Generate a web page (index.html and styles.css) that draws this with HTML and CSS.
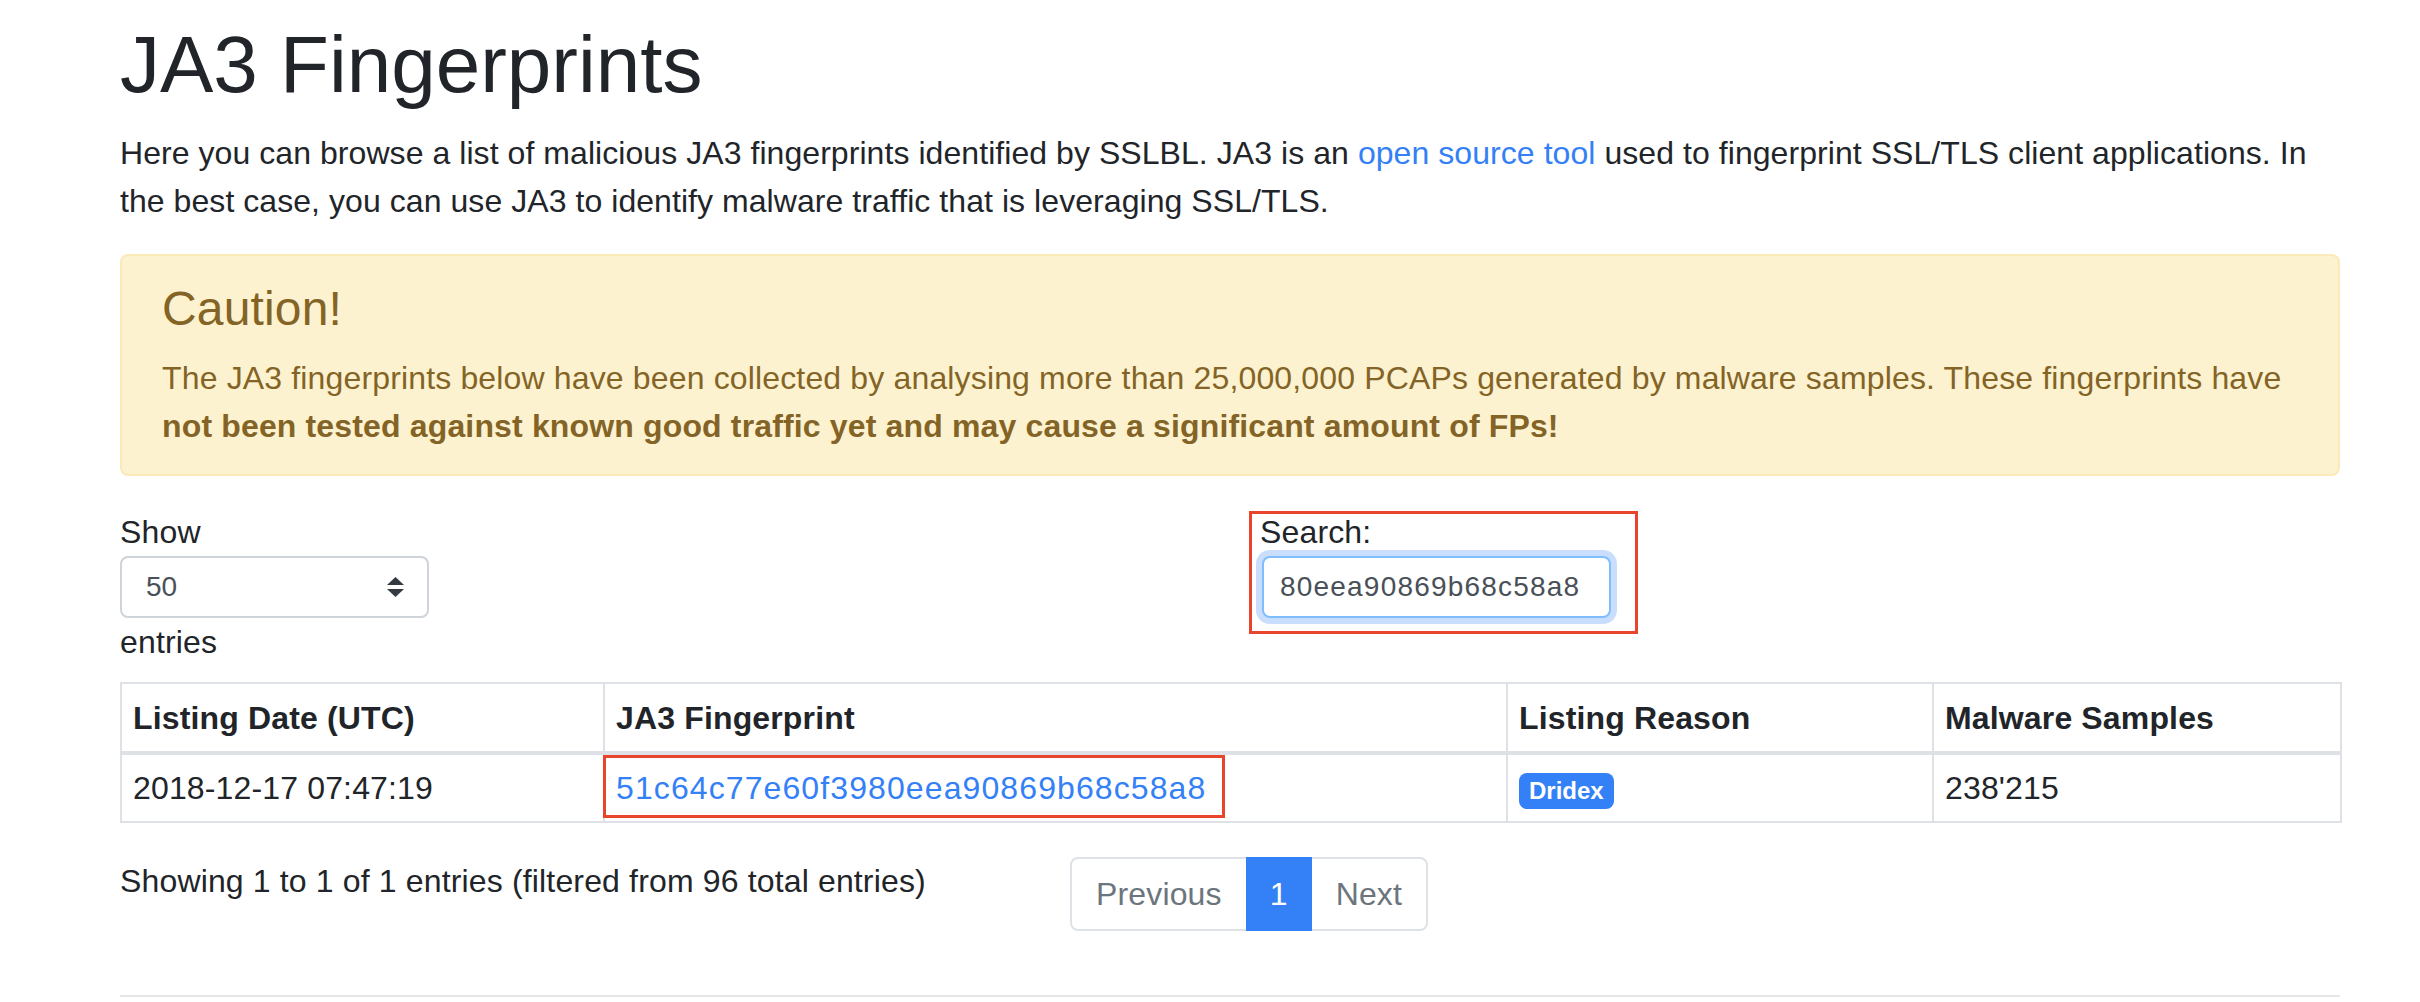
FILE: index.html
```html
<!DOCTYPE html>
<html lang="en">
<head>
<meta charset="utf-8">
<title>JA3 Fingerprints</title>
<link rel="stylesheet" href="styles.css">
</head>
<body>
<main class="container">
  <h1 class="page-title">JA3 Fingerprints</h1>
  <p class="intro">Here you can browse a list of malicious JA3 fingerprints identified by SSLBL. JA3 is an <a class="link" href="#">open source tool</a> used to fingerprint SSL/TLS client applications. In the best case, you can use JA3 to identify malware traffic that is leveraging SSL/TLS.</p>

  <div class="alert">
    <h4 class="alert-heading">Caution!</h4>
    <p class="alert-text">The JA3 fingerprints below have been collected by analysing more than 25,000,000 PCAPs generated by malware samples. These fingerprints have <strong>not been tested against known good traffic yet and may cause a significant amount of FPs!</strong></p>
  </div>

  <div class="dt-top">
    <div class="dt-length">
      <label class="length-label" for="length">Show</label>
      <div class="select-wrap">
        <select id="length" class="length-select"><option>50</option></select>
        <svg class="select-arrows" viewBox="0 0 17 20" aria-hidden="true"><path d="M8.5 0 L17 8 H0 Z M0 12 H17 L8.5 20 Z" fill="#343a40"/></svg>
      </div>
      <span class="length-label">entries</span>
    </div>
    <div class="dt-filter">
      <label class="filter-label" for="search">Search:</label>
      <input id="search" class="search-input" type="text" value="80eea90869b68c58a8" spellcheck="false">
      <span class="annot annot-search"></span>
    </div>
  </div>

  <table class="dt-table">
    <colgroup>
      <col class="col-date">
      <col class="col-fp">
      <col class="col-reason">
      <col class="col-samples">
    </colgroup>
    <thead>
      <tr>
        <th>Listing Date (UTC)</th>
        <th>JA3 Fingerprint</th>
        <th>Listing Reason</th>
        <th>Malware Samples</th>
      </tr>
    </thead>
    <tbody>
      <tr>
        <td>2018-12-17 07:47:19</td>
        <td class="fp-cell"><a class="link fp-link" href="#">51c64c77e60f3980eea90869b68c58a8</a><span class="annot annot-fp"></span></td>
        <td><span class="badge">Dridex</span></td>
        <td>238'215</td>
      </tr>
    </tbody>
  </table>

  <div class="dt-bottom">
    <div class="dt-info">Showing 1 to 1 of 1 entries (filtered from 96 total entries)</div>
    <ul class="pagination">
      <li class="page-item first"><span class="page-link">Previous</span></li>
      <li class="page-item active"><span class="page-link">1</span></li>
      <li class="page-item last"><span class="page-link">Next</span></li>
    </ul>
  </div>

  <hr class="divider">
</main>
</body>
</html>
```

FILE: styles.css
```css
* {
  box-sizing: border-box;
}

body {
  margin: 0;
  font-family: "Liberation Sans", Arial, sans-serif;
  font-size: 32px;
  line-height: 48px;
  letter-spacing: 0.15px;
  color: #212529;
  background: #ffffff;
}

.container {
  width: 2220px;
  margin-left: 120px;
  padding-top: 17px;
}

.page-title {
  font-size: 80px;
  line-height: 96px;
  font-weight: 400;
  letter-spacing: 0;
  margin: 0 0 16px;
}

.intro {
  letter-spacing: 0.06px;
  margin: 0 0 29px;
}

.link {
  color: #3480f6;
  text-decoration: none;
}

.alert {
  background: #fcf2cf;
  border: 2px solid #fbeab9;
  border-radius: 8px;
  padding: 24px 34px 24px 40px;
  color: #846426;
  margin-bottom: 32px;
}

.alert-heading {
  font-size: 48px;
  line-height: 57.6px;
  font-weight: 400;
  margin: 0 0 16px;
}

.alert-text {
  margin: 0;
}

.dt-top {
  display: grid;
  grid-template-columns: 1080px 1080px;
  column-gap: 60px;
}

.length-label {
  display: block;
}

.select-wrap {
  position: relative;
  width: 309px;
  height: 62px;
}

.length-select {
  appearance: none;
  -webkit-appearance: none;
  display: block;
  width: 100%;
  height: 100%;
  border: 2px solid #ced4da;
  border-radius: 8px;
  background: #ffffff;
  font-family: "Liberation Sans", Arial, sans-serif;
  font-size: 28px;
  color: #495057;
  padding: 0 56px 0 24px;
  margin: 0;
}

.select-arrows {
  position: absolute;
  left: 267px;
  top: 21px;
  width: 17px;
  height: 20px;
  pointer-events: none;
}

.dt-filter {
  position: relative;
}

.filter-label {
  display: block;
}

.search-input {
  display: block;
  width: 349px;
  height: 62px;
  margin: 0 0 0 2px;
  border: 2px solid #80bdff;
  border-radius: 8px;
  box-shadow: 0 0 0 6px #c9ddfc;
  padding: 0 16px;
  font-family: "Liberation Sans", Arial, sans-serif;
  font-size: 28px;
  letter-spacing: 1.2px;
  color: #495057;
  outline: none;
  text-decoration: underline dotted #ee6f60;
  text-decoration-thickness: 3px;
  text-underline-offset: 7px;
}

.annot {
  position: absolute;
  border: 3px solid #e8452c;
  pointer-events: none;
}

.annot-search {
  left: -11px;
  top: 3px;
  width: 389px;
  height: 123px;
}

.dt-table {
  width: 2220px;
  table-layout: fixed;
  border-collapse: collapse;
  margin: 16px 0 34px;
}

.col-date { width: 483px; }
.col-fp { width: 903px; }
.col-reason { width: 426px; }
.col-samples { width: 408px; }

.dt-table th,
.dt-table td {
  border: 2px solid #dee2e6;
  text-align: left;
  vertical-align: top;
  padding: 9px 11px;
}

.dt-table th {
  padding-top: 10px;
  padding-bottom: 9px;
  font-weight: 700;
  border-bottom-width: 4px;
}

.fp-cell {
  position: relative;
}

.fp-link {
  letter-spacing: 1.1px;
}

.annot-fp {
  left: -2px;
  top: 0;
  width: 622px;
  height: 63px;
}

.badge {
  display: inline-block;
  background: #3480f6;
  color: #ffffff;
  font-size: 24px;
  font-weight: 700;
  line-height: 1;
  letter-spacing: 0;
  padding: 6px 10px;
  border-radius: 8px;
}

.dt-bottom {
  display: grid;
  grid-template-columns: 890px 1270px;
  column-gap: 60px;
}

.pagination {
  display: flex;
  list-style: none;
  margin: 0;
  padding: 0;
}

.page-link {
  display: block;
  padding: 15px 24px;
  line-height: 40px;
  border: 2px solid #dee2e6;
  color: #6c757d;
  background: #ffffff;
  margin-left: -2px;
}

.first .page-link {
  margin-left: 0;
  border-radius: 8px 0 0 8px;
}

.last .page-link {
  border-radius: 0 8px 8px 0;
}

.active .page-link {
  background: #3480f6;
  border-color: #3480f6;
  color: #ffffff;
  padding-left: 22px;
  padding-right: 22px;
  position: relative;
}

.divider {
  border: 0;
  border-top: 2px solid #e6e6e6;
  margin: 64px 0 0;
}
```
